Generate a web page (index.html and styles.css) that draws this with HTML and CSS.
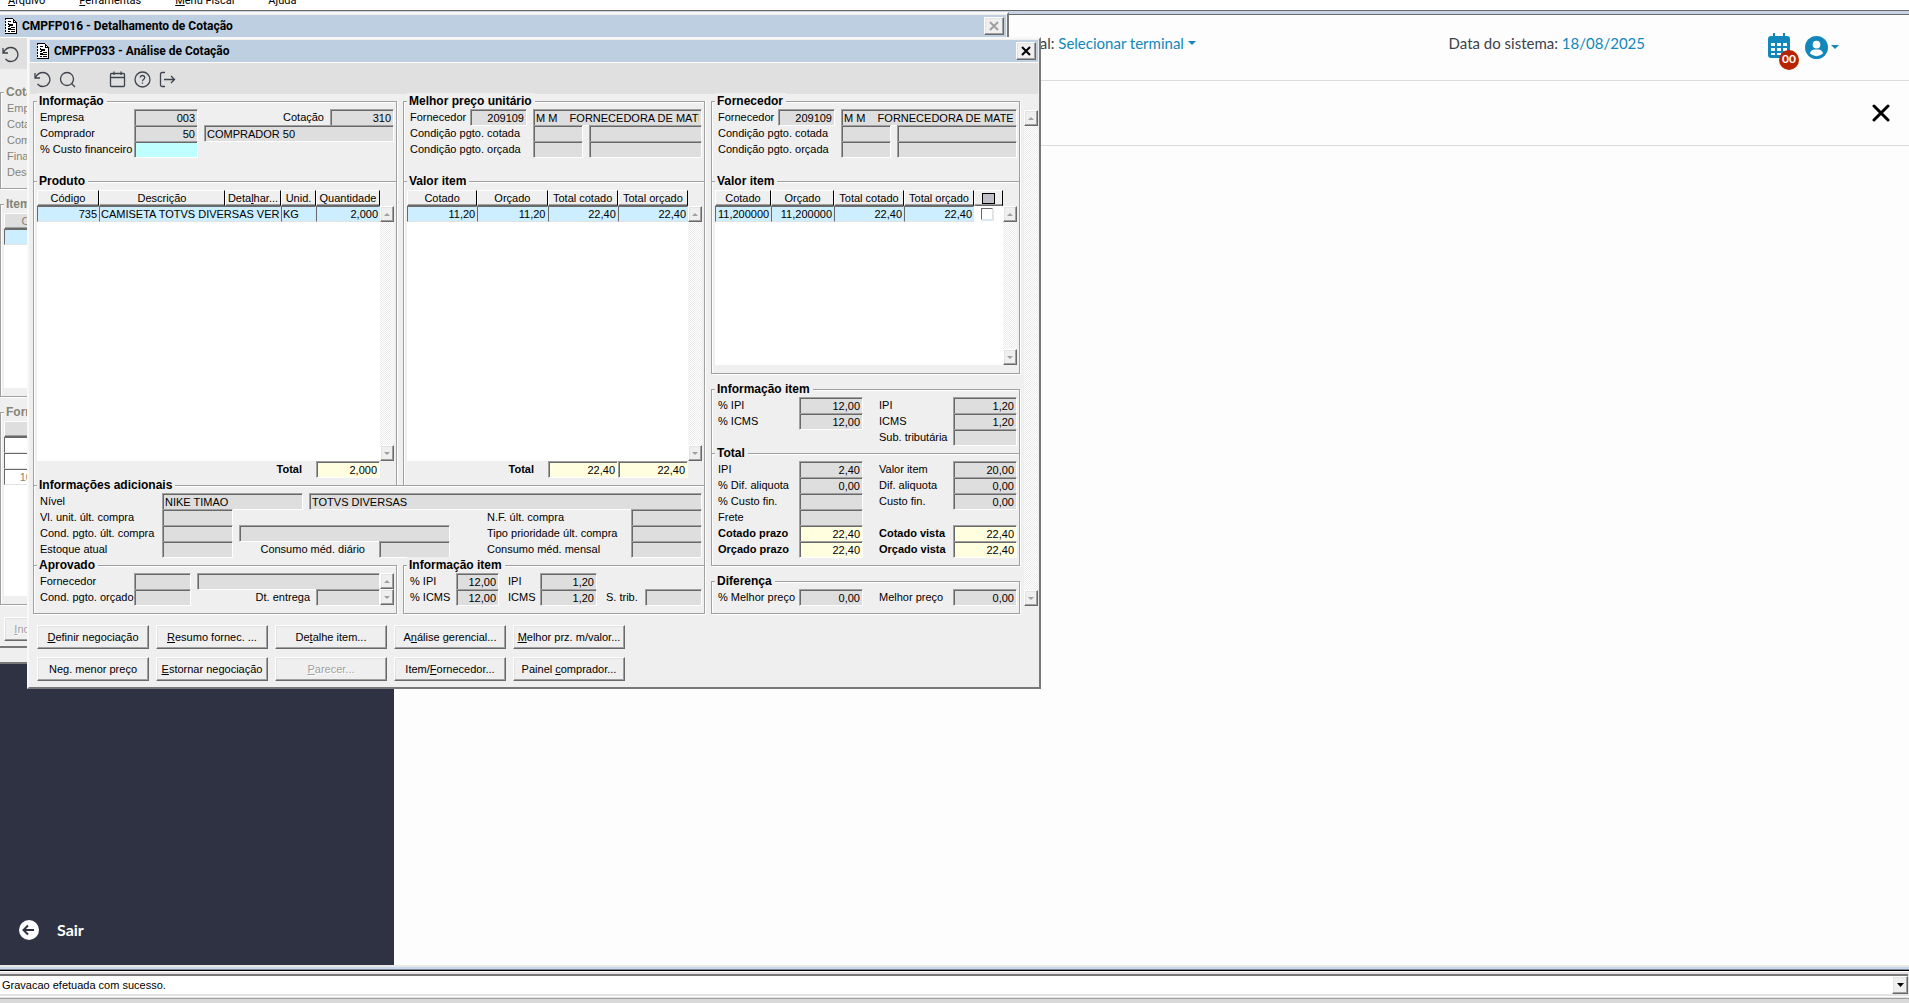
FILE: index.html
```html
<!DOCTYPE html>
<html lang="pt-BR">
<head>
  <meta charset="UTF-8">
  <meta name="viewport" content="width=device-width, initial-scale=1.0">
  <title>CMPFP033 - Análise de Cotação</title>
  <link rel="stylesheet" href="styles.css">
</head>
<body>
  <svg width="0" height="0" class="sprite">
    <symbol id="i-doc" viewBox="0 0 13 16">
      <path d="M1.500 .5h7.500l3 3v12h-10.500z" fill="#fff"/>
      <path d="M1 0h8v1H1zM9 1h1v3h3v12h-1V5H9zM10 2h1v1h-1zM11 3h1v1h-1zM1 15h12v1H1z" fill="#000"/>
      <path d="M1.500 0v16" stroke="#000" stroke-dasharray="2 1" fill="none"/>
      <path d="M4 3h3v1H4zM4 5h1v2H4zM5 6h4v2H5zM4 8h2v1H4zM7 9h4v1H7zM4 10h3v2H4zM7 11h4v1H7zM4 13h2v1H4zM7 13h4v1H7z" fill="#000"/>
    </symbol>
    <symbol id="i-undo" viewBox="0 0 17 17">
      <path d="M1 2v5h5M1.500 6.500C3 3.500 6 1.500 9 1.500a7 7 0 1 1-5.500 11.500" fill="none" stroke="#3f434c" stroke-width="1.300"/>
    </symbol>
    <symbol id="i-search" viewBox="0 0 17 17">
      <path d="M14.500 8a6.500 6.500 0 1 1-13 0 6.500 6.500 0 0 1 13 0zM12.500 12.500l3.500 3.500" fill="none" stroke="#3f434c" stroke-width="1.300"/>
    </symbol>
    <symbol id="i-cal" viewBox="0 0 17 17">
      <path d="M2.500 2.500h12q1 0 1 1v11q0 1-1 1h-12q-1 0-1-1v-11q0-1 1-1zM1.500 6.500h14M5 .5v3.500M12 .5v3.500" fill="none" stroke="#3f434c" stroke-width="1.300"/>
    </symbol>
    <symbol id="i-help" viewBox="0 0 17 17">
      <circle cx="8.500" cy="8.500" r="7.500" fill="none" stroke="#3f434c" stroke-width="1.300"/>
      <path d="M6.300 6.500q.2-2 2.200-2t2.200 2q0 1.200-1.300 2-.9.500-.9 1.700M8.500 11.500v1.300" fill="none" stroke="#3f434c" stroke-width="1.300"/>
    </symbol>
    <symbol id="i-exit" viewBox="0 0 17 17">
      <path d="M6 1.500H3q-1.500 0-1.500 1.500v11q0 1.500 1.500 1.500h3M5 8.500h10.500M12 5l3.500 3.500L12 12" fill="none" stroke="#3f434c" stroke-width="1.300"/>
    </symbol>
  </svg>

  <nav class="menubar">
    <span><u>A</u>rquivo</span>
    <span><u>F</u>erramentas</span>
    <span><u>M</u>enu Fiscal</span>
    <span>A<u>j</u>uda</span>
  </nav>

  <main class="desktop">
    <div class="web">
      <aside class="sidebar">
        <a href="#" class="sair">
          <svg width="20" height="20" viewBox="0 0 20 20"><circle cx="10" cy="10" r="10" fill="#fff"/><path d="M15 10H5M9 5.500L4.500 10 9 14.500" fill="none" stroke="#2f3242" stroke-width="2"/></svg>
          Sair
        </a>
      </aside>
      <div class="content">
        <header class="web-header">
          <span>Terminal: <a href="#">Selecionar terminal <i class="caret"></i></a></span>
          <span class="date">Data do sistema: <a href="#">18/08/2025</a></span>
          <a href="#" class="agenda">
            <svg width="22" height="25" viewBox="0 0 22 25"><path d="M5 0h2v3h8V0h2v3h2q3 0 3 3v16q0 3-3 3H3q-3 0-3-3V6q0-3 3-3h2z" fill="#1187bb"/><path d="M3 10h4v3H3zM9 10h4v3H9zM15 10h4v3h-4zM3 15h4v3H3zM9 15h4v3H9zM15 15h4v3h-4zM3 20h4v2H3zM9 20h4v2H9zM15 20h4v2h-4z" fill="#fff"/></svg>
            <span class="badge">00</span>
          </a>
          <a href="#" class="user">
            <svg width="23" height="23" viewBox="0 0 24 24"><circle cx="12" cy="12" r="12" fill="#1187bb"/><circle cx="12" cy="9" r="4" fill="#fff"/><path d="M5 18q1.500-4 5-4h4q3.500 0 5 4-3 3-7 3t-7-3z" fill="#fff"/></svg>
            <i class="caret"></i>
          </a>
        </header>
        <div class="web-sub">
          <button class="web-close" aria-label="Fechar"><svg width="18" height="18" viewBox="0 0 18 18"><path d="M2 2l14 14M16 2L2 16" stroke="#000" stroke-width="3" stroke-linecap="round"/></svg></button>
        </div>
      </div>
    </div>

    <!-- CMPFP016, atrás -->
    <div class="window win-016">
      <div class="titlebar">
        <svg width="13" height="16"><use href="#i-doc"/></svg>
        <h1>CMPFP016 - Detalhamento de Cotação</h1>
        <button class="close" disabled aria-label="Fechar"><svg width="10" height="10" viewBox="0 0 10 10"><path d="M1 1l8 8M9 1L1 9" stroke="#a0a0a0" stroke-width="2"/></svg></button>
      </div>
      <div class="toolbar">
        <button aria-label="Desfazer"><svg width="17" height="17"><use href="#i-undo"/></svg></button>
      </div>
      <div class="back">
        <section class="group end">
          <h2>Cotação</h2>
          <p>Empresa</p>
          <p>Cotação</p>
          <p>Comprador</p>
          <p>Financeiro</p>
          <p>Descrição</p>
        </section>
        <section class="group end">
          <h2>Item</h2>
          <div class="list">
            <table class="grid">
              <colgroup><col class="w70"><col></colgroup>
              <tr><th>Código</th><th></th></tr>
              <tr class="sel"><td></td><td></td></tr>
            </table>
          </div>
        </section>
        <section class="group end">
          <h2>Fornecedor</h2>
          <div class="list">
            <table class="grid">
              <colgroup><col class="w30"><col></colgroup>
              <tr><th colspan="2"></th></tr>
              <tr><td></td><td></td></tr>
              <tr><td>1</td><td></td></tr>
              <tr><td>10</td><td></td></tr>
            </table>
          </div>
        </section>
        <button class="btn" disabled><u>I</u>ncluir</button>
        <div class="back-foot"></div>
      </div>
    </div>

    <!-- CMPFP033 -->
    <div class="window win-033">
      <div class="titlebar">
        <svg width="13" height="16"><use href="#i-doc"/></svg>
        <h1>CMPFP033 - Análise de Cotação</h1>
        <button class="close" aria-label="Fechar"><svg width="10" height="10" viewBox="0 0 10 10"><path d="M1 1l8 8M9 1L1 9" stroke="#000" stroke-width="2"/></svg></button>
      </div>
      <div class="toolbar">
        <button aria-label="Desfazer"><svg width="17" height="17"><use href="#i-undo"/></svg></button>
        <button aria-label="Pesquisar"><svg width="17" height="17"><use href="#i-search"/></svg></button>
        <span class="sep"></span>
        <button aria-label="Calendário"><svg width="17" height="17"><use href="#i-cal"/></svg></button>
        <button aria-label="Ajuda"><svg width="17" height="17"><use href="#i-help"/></svg></button>
        <button aria-label="Sair"><svg width="17" height="17"><use href="#i-exit"/></svg></button>
      </div>

      <div class="panels">
        <div class="left">
          <section class="group top">
            <h2>Informação</h2>
            <div class="row">
              <label class="w94" for="empresa">Empresa</label><input id="empresa" class="w64 num" value="003" readonly>
              <label class="fill right" for="cotacao">Cotação</label><input id="cotacao" class="w64 num" value="310" readonly>
            </div>
            <div class="row">
              <label class="w94" for="comprador">Comprador</label><input id="comprador" class="w64 num" value="50" readonly>
              <input class="fill gap" aria-label="Nome do comprador" value="COMPRADOR 50" readonly>
            </div>
            <div class="row">
              <label class="w94" for="custo">% Custo financeiro</label><input id="custo" class="w64 num edit">
            </div>
          </section>

          <section class="group top">
            <h2>Melhor preço unitário</h2>
            <div class="row">
              <label class="w60" for="mforn">Fornecedor</label><input id="mforn" class="w57 num" value="209109" readonly>
              <input class="fill gap" aria-label="Nome do fornecedor" value="M M    FORNECEDORA DE MATERIAIS" readonly>
            </div>
            <div class="row">
              <label class="w123" for="mcot">Condição pgto. cotada</label><input id="mcot" class="w50" readonly>
              <input class="fill gap" aria-label="Descrição cotada" readonly>
            </div>
            <div class="row">
              <label class="w123" for="morc">Condição pgto. orçada</label><input id="morc" class="w50" readonly>
              <input class="fill gap" aria-label="Descrição orçada" readonly>
            </div>
          </section>

          <section class="group">
            <h2>Produto</h2>
            <div class="list tall">
              <table class="grid">
                <colgroup><col class="w62"><col class="w126"><col class="w56"><col class="w35"><col></colgroup>
                <tr><th>Código</th><th>Descrição</th><th>Deta<u>l</u>har...</th><th>Unid.</th><th>Quantidade</th></tr>
                <tr class="sel"><td>735</td><td class="txt" colspan="2">CAMISETA TOTVS DIVERSAS VERMELHA</td><td class="txt">KG</td><td>2,000</td></tr>
              </table>
              <div class="scroll"><button class="up" disabled aria-label="Subir"></button><button class="down" disabled aria-label="Descer"></button></div>
            </div>
            <div class="row total">
              <label for="tqtd">Total</label><input id="tqtd" class="w64 num sum" value="2,000" readonly>
            </div>
          </section>

          <section class="group">
            <h2>Valor item</h2>
            <div class="list tall">
              <table class="grid">
                <tr><th>Cotado</th><th>Orçado</th><th>Total cotado</th><th>Total orçado</th></tr>
                <tr class="sel"><td>11,20</td><td>11,20</td><td>22,40</td><td>22,40</td></tr>
              </table>
              <div class="scroll"><button class="up" disabled aria-label="Subir"></button><button class="down" disabled aria-label="Descer"></button></div>
            </div>
            <div class="row total">
              <label for="tcot">Total</label><input id="tcot" class="w70 num sum" value="22,40" readonly>
              <input class="w70 num sum" aria-label="Total orçado" value="22,40" readonly>
            </div>
          </section>

          <section class="group wide">
            <h2>Informações adicionais</h2>
            <div class="row">
              <label class="w122" for="nivel">Nível</label><input id="nivel" class="w141" value="NIKE TIMAO" readonly>
              <input class="fill gap" aria-label="Descrição do nível" value="TOTVS DIVERSAS" readonly>
            </div>
            <div class="row">
              <label class="w122" for="vunit">Vl. unit. últ. compra</label><input id="vunit" class="w71" readonly>
              <label class="w144 push" for="nf">N.F. últ. compra</label><input id="nf" class="w71" readonly>
            </div>
            <div class="row">
              <label class="w122" for="cpg">Cond. pgto. últ. compra</label><input id="cpg" class="w71" readonly>
              <input class="w211 gap" aria-label="Descrição da condição" readonly>
              <label class="w144 push" for="tipo">Tipo prioridade últ. compra</label><input id="tipo" class="w71" readonly>
            </div>
            <div class="row">
              <label class="w122" for="estoque">Estoque atual</label><input id="estoque" class="w71" readonly>
              <label class="w146 far" for="cmd">Consumo méd. diário</label><input id="cmd" class="w71" readonly>
              <label class="w144 push" for="cmm">Consumo méd. mensal</label><input id="cmm" class="w71" readonly>
            </div>
          </section>

          <section class="group end split">
            <h2>Aprovado</h2>
            <div class="rows">
              <div class="row">
                <label class="w94" for="aforn">Fornecedor</label><input id="aforn" class="w57" readonly>
                <input class="fill gap" aria-label="Fornecedor aprovado" readonly>
              </div>
              <div class="row">
                <label class="w94" for="acond">Cond. pgto. orçado</label><input id="acond" class="w57" readonly>
                <label class="fill right" for="dt">Dt. entrega</label><input id="dt" class="w64" readonly>
              </div>
            </div>
            <div class="scroll"><button class="up" disabled aria-label="Subir"></button><button class="down" disabled aria-label="Descer"></button></div>
          </section>

          <section class="group end">
            <h2>Informação item</h2>
            <div class="row">
              <label class="w46" for="pipi">% IPI</label><input id="pipi" class="w43 num" value="12,00" readonly>
              <label class="w41 ind" for="vipi">IPI</label><input id="vipi" class="w57 num" value="1,20" readonly>
            </div>
            <div class="row">
              <label class="w46" for="picms">% ICMS</label><input id="picms" class="w43 num" value="12,00" readonly>
              <label class="w41 ind" for="vicms">ICMS</label><input id="vicms" class="w57 num" value="1,20" readonly>
              <label class="fill ind" for="strib">S. trib.</label><input id="strib" class="w57" readonly>
            </div>
          </section>
        </div>

        <div class="side">
          <section class="group top">
            <h2>Fornecedor</h2>
            <div class="row">
              <label class="w60" for="fforn">Fornecedor</label><input id="fforn" class="w57 num" value="209109" readonly>
              <input class="fill gap" aria-label="Nome do fornecedor" value="M M    FORNECEDORA DE MATERIAIS" readonly>
            </div>
            <div class="row">
              <label class="w123" for="fcot">Condição pgto. cotada</label><input id="fcot" class="w50" readonly>
              <input class="fill gap" aria-label="Descrição cotada" readonly>
            </div>
            <div class="row">
              <label class="w123" for="forc">Condição pgto. orçada</label><input id="forc" class="w50" readonly>
              <input class="fill gap" aria-label="Descrição orçada" readonly>
            </div>
          </section>

          <section class="group end">
            <h2>Valor item</h2>
            <div class="list short">
              <table class="grid">
                <colgroup><col class="w56"><col class="w63"><col class="w70"><col class="w70"><col></colgroup>
                <tr><th>Cotado</th><th>Orçado</th><th>Total cotado</th><th>Total orçado</th><th class="mark"><i></i></th></tr>
                <tr class="sel"><td>11,200000</td><td>11,200000</td><td>22,40</td><td>22,40</td><td class="chk"><input type="checkbox" aria-label="Selecionar"></td></tr>
              </table>
              <div class="scroll"><button class="up" disabled aria-label="Subir"></button><button class="down" disabled aria-label="Descer"></button></div>
            </div>
          </section>

          <section class="group">
            <h2>Informação item</h2>
            <div class="row">
              <label class="w81" for="r1">% IPI</label><input id="r1" class="w64 num" value="12,00" readonly>
              <label class="w74 push" for="r2">IPI</label><input id="r2" class="w64 num" value="1,20" readonly>
            </div>
            <div class="row">
              <label class="w81" for="r3">% ICMS</label><input id="r3" class="w64 num" value="12,00" readonly>
              <label class="w74 push" for="r4">ICMS</label><input id="r4" class="w64 num" value="1,20" readonly>
            </div>
            <div class="row">
              <label class="w74 push" for="r5">Sub. tributária</label><input id="r5" class="w64" readonly>
            </div>
          </section>

          <section class="group end">
            <h2>Total</h2>
            <div class="row">
              <label class="w81" for="t1">IPI</label><input id="t1" class="w64 num" value="2,40" readonly>
              <label class="w74 push" for="t2">Valor item</label><input id="t2" class="w64 num" value="20,00" readonly>
            </div>
            <div class="row">
              <label class="w81" for="t3">% Dif. aliquota</label><input id="t3" class="w64 num" value="0,00" readonly>
              <label class="w74 push" for="t4">Dif. aliquota</label><input id="t4" class="w64 num" value="0,00" readonly>
            </div>
            <div class="row">
              <label class="w81" for="t5">% Custo fin.</label><input id="t5" class="w64" readonly>
              <label class="w74 push" for="t6">Custo fin.</label><input id="t6" class="w64 num" value="0,00" readonly>
            </div>
            <div class="row">
              <label class="w81" for="t7">Frete</label><input id="t7" class="w64" readonly>
            </div>
            <div class="row strong">
              <label class="w81" for="t8">Cotado prazo</label><input id="t8" class="w64 num sum" value="22,40" readonly>
              <label class="w74 push" for="t9">Cotado vista</label><input id="t9" class="w64 num sum" value="22,40" readonly>
            </div>
            <div class="row strong">
              <label class="w81" for="t10">Orçado prazo</label><input id="t10" class="w64 num sum" value="22,40" readonly>
              <label class="w74 push" for="t11">Orçado vista</label><input id="t11" class="w64 num sum" value="22,40" readonly>
            </div>
          </section>

          <section class="group end">
            <h2>Diferença</h2>
            <div class="row">
              <label class="w81" for="d1">% Melhor preço</label><input id="d1" class="w64 num" value="0,00" readonly>
              <label class="w74 push" for="d2">Melhor preço</label><input id="d2" class="w64 num" value="0,00" readonly>
            </div>
          </section>
        </div>

        <div class="scroll outer"><button class="up" disabled aria-label="Subir"></button><button class="down" disabled aria-label="Descer"></button></div>
      </div>

      <div class="actions">
        <button class="btn"><u>D</u>efinir negociação</button>
        <button class="btn"><u>R</u>esumo fornec. ...</button>
        <button class="btn">De<u>t</u>alhe item...</button>
        <button class="btn">A<u>n</u>álise gerencial...</button>
        <button class="btn"><u>M</u>elhor prz. m/valor...</button>
        <button class="btn">Neg. menor preço</button>
        <button class="btn"><u>E</u>stornar negociação</button>
        <button class="btn" disabled><u>P</u>arecer...</button>
        <button class="btn">Item/<u>F</u>ornecedor...</button>
        <button class="btn">Painel <u>c</u>omprador...</button>
      </div>
    </div>
  </main>

  <footer class="status">
    <div class="status-box">
      <select aria-label="Mensagens"><option>Gravacao efetuada com sucesso.</option></select>
      <span class="drop"><svg width="7" height="4" viewBox="0 0 7 4"><path d="M0 0h7L3.500 4z"/></svg></span>
    </div>
  </footer>
</body>
</html>
```
FILE: styles.css
```css
* {
  box-sizing: border-box;
}
body {
  margin: 0;
  height: 100vh;
  display: flex;
  flex-direction: column;
  overflow: hidden;
  background: #fff;
  color: #000;
  font: 11px/16px "Liberation Sans", Arial, sans-serif;
}
h1, h2, p {
  margin: 0;
}
input, button, select {
  font: inherit;
  color: inherit;
  margin: 0;
  padding: 0;
  border: 0;
  border-radius: 0;
  outline: 0;
}
svg {
  display: block;
}
.sprite {
  position: absolute;
}

/* menu */
.menubar {
  flex: none;
  height: 10px;
  padding: 0 8px 2px;
  display: flex;
  align-items: flex-end;
  gap: 34px;
  overflow: hidden;
  font-family: Roboto, sans-serif;
  line-height: 14px;
}

/* área web */
.desktop {
  flex: 1;
  min-height: 0;
  position: relative;
  overflow: hidden;
  display: flex;
  padding-top: 3px;
  border-top: 1px solid #696969;
  background: #c9d3e6;
}
.web {
  flex: 1;
  display: flex;
  background: #fdfdfd;
  border-top: 1px solid #696969;
}
.sidebar {
  width: 394px;
  display: flex;
  align-items: flex-end;
  background: #2f3242;
}
.sair {
  display: flex;
  align-items: center;
  gap: 18px;
  padding: 0 19px 24px;
  color: #fff;
  text-decoration: none;
  font: 700 16px/22px Lato, sans-serif;
}
.content {
  flex: 1;
}
.web-header {
  height: 66px;
  display: flex;
  align-items: center;
  padding: 0 70px 9px 601px;
  border-bottom: 1px solid #dcdcdc;
  color: #3c4248;
  font: 15px/22px Lato, sans-serif;
}
.web-header a {
  color: #1187bb;
  text-decoration: none;
}
.date {
  margin-left: auto;
}
.caret {
  display: inline-block;
  vertical-align: 4px;
  border: 4px solid transparent;
  border-top-color: #1187bb;
  border-bottom: 0;
}
.agenda {
  position: relative;
  margin: 4px 0 0 123px;
}
.badge {
  position: absolute;
  left: 11px;
  top: 17px;
  width: 20px;
  height: 20px;
  border-radius: 50%;
  background: #b92400;
  color: #fff;
  text-align: center;
  font: 700 12px/18px Lato, sans-serif;
}
.user {
  display: flex;
  align-items: center;
  gap: 3px;
  margin: 8px 0 0 15px;
}
.web-sub {
  height: 65px;
  padding: 0 19px;
  display: flex;
  align-items: center;
  justify-content: flex-end;
  border-bottom: 1px solid #dcdcdc;
}
.web-close {
  background: none;
}

/* janelas */
.window {
  position: absolute;
  width: 1014px;
  height: 652px;
  padding: 1px;
  border: 2px solid;
  border-color: #f8f8f8 #787878 #787878 #f8f8f8;
  background: #efefef;
}
.win-016 {
  left: -5px;
  top: 1px;
}
.win-033 {
  left: 27px;
  top: 26px;
}
.titlebar {
  height: 22px;
  display: flex;
  align-items: center;
  gap: 5px;
  padding: 0 2px 0 6px;
  background: #bdcfe0;
}
.titlebar h1 {
  flex: 1;
  font: 700 12px/20px Roboto, sans-serif;
}
.close {
  width: 20px;
  height: 18px;
  display: flex;
  align-items: center;
  justify-content: center;
}
.close, .btn, .scroll button, .drop {
  background: #efefef;
  border: 1px solid;
  border-color: #fff #696969 #696969 #fff;
  box-shadow: inset -1px -1px #a0a0a0, inset 1px 1px #e3e3e3;
}
.toolbar {
  height: 32px;
  display: flex;
  align-items: center;
  gap: 8px;
  padding: 2px 4px 0;
  border-top: 1px solid #fff;
  background: #e0e0e0;
}
.toolbar button {
  background: none;
}
.sep {
  width: 17px;
}

/* grupos */
.panels {
  display: flex;
  align-items: flex-start;
  gap: 6px;
  padding: 7px 0 0 3px;
}
.left {
  flex: none;
  display: grid;
  grid-template-columns: 364px minmax(0, 1fr);
  column-gap: 6px;
  width: 672px;
}
.side {
  flex: 1;
  min-width: 0;
}
.wide {
  grid-column: 1 / -1;
}
.group {
  padding: 0 2px 8px 6px;
  border: solid #a0a0a0;
  border-width: 1px 1px 0;
  box-shadow: inset 1px 1px #fff, 1px 0 #fff;
}
.group.top {
  padding-bottom: 24px;
}
.group.end {
  padding-bottom: 8px;
  border-bottom-width: 1px;
  box-shadow: inset 1px 1px #fff, 1px 1px #fff;
}
.side .end + .group {
  margin-top: 15px;
}
.group h2 {
  width: fit-content;
  margin: -9px 0 0 -3px;
  padding: 0 3px 0 2px;
  background: #efefef;
  font-size: 12px;
  line-height: 16px;
}
.row {
  display: flex;
  height: 16px;
}
.row label {
  flex: none;
  white-space: nowrap;
}
.row .fill {
  flex: 1;
  width: 0;
  min-width: 0;
}
.row .right {
  text-align: right;
  padding-right: 6px;
}
.row .far {
  text-align: right;
  padding-right: 14px;
}
.row .ind {
  padding-left: 9px;
}
.row .push {
  margin-left: auto;
}
.row .gap {
  margin-left: 6px;
}
.strong label, .total label {
  font-weight: 700;
}
.row input {
  height: 17px;
  padding: 0 2px;
  background: #dedede;
  border: 1px solid;
  border-color: #a0a0a0 #fff #fff #a0a0a0;
  box-shadow: inset 1px 1px #696969;
}
.row .num {
  text-align: right;
}
.row .edit {
  background: #c0ffff;
}
.row .sum {
  background: #ffffe0;
}
.total {
  justify-content: flex-end;
  padding-right: 14px;
}
.total label {
  padding-right: 14px;
}

/* listas */
.list {
  display: flex;
  align-items: flex-start;
  margin-left: -3px;
  background: linear-gradient(#efefef 17px, #fff 17px);
}
.list.tall {
  height: 272px;
}
.list.short {
  height: 176px;
}
.grid {
  flex: 1;
  width: 100%;
  margin-top: 1px;
  table-layout: fixed;
  border-collapse: separate;
  border-spacing: 0;
}
.grid th {
  height: 16px;
  padding: 0;
  overflow: hidden;
  font-weight: 400;
  line-height: 13px;
  white-space: nowrap;
  background: #efefef;
  border: 1px solid;
  border-color: #fff #000 #696969 #fff;
  box-shadow: inset 0 -1px #a0a0a0;
}
.grid td {
  height: 16px;
  padding: 0 1px 0 2px;
  overflow: hidden;
  text-align: right;
  line-height: 14px;
  white-space: nowrap;
  background: #fff;
  border: 1px solid;
  border-color: #696969 #e3e3e3 #e3e3e3 #696969;
}
.grid .txt {
  text-align: left;
  padding: 0 0 0 1px;
}
.grid .sel td {
  background: #cceeff;
}
.mark i {
  display: block;
  width: 13px;
  height: 11px;
  margin: 0 auto;
  background: #c0c0c8;
  border: 1px solid #000;
}
.grid .sel .chk {
  background: #fff;
  border: 0;
  padding: 0 7px;
}
.chk input {
  appearance: none;
  display: block;
  width: 12px;
  height: 12px;
  background: #fff;
  border: 1px solid;
  border-color: #696969 #e3e3e3 #e3e3e3 #696969;
  box-shadow: 1px 1px #cceeff;
}
.scroll {
  flex: none;
  width: 14px;
  display: flex;
  flex-direction: column;
  justify-content: space-between;
  background: repeating-conic-gradient(#fff 0 25%, #ececec 0 50%) 0 0 / 2px 2px;
}
.list .scroll {
  align-self: stretch;
  margin-top: 17px;
}
.scroll button {
  width: 14px;
  height: 16px;
  display: flex;
  align-items: center;
  justify-content: center;
}
.scroll button::before {
  content: "";
  border: 3px solid transparent;
}
.scroll .up::before {
  border-top: 0;
  border-bottom-color: #a0a0a0;
}
.scroll .down::before {
  border-bottom: 0;
  border-top-color: #a0a0a0;
}
.scroll.outer {
  height: 496px;
  margin-top: 9px;
  margin-left: -2px;
}
.split {
  display: grid;
  grid-template-columns: minmax(0, 1fr) 14px;
}
.split h2 {
  grid-column: 1 / -1;
}

/* botões */
.actions {
  display: grid;
  grid-template-columns: repeat(5, 112px);
  gap: 8px 7px;
  padding: 11px 7px;
}
.btn {
  height: 24px;
}
.btn:disabled {
  color: #a0a0a0;
  text-shadow: 1px 1px #fff;
}

/* conteúdo da CMPFP016 */
.back {
  padding: 23px 3px 0 2px;
  color: #848478;
}
.back .group {
  margin-bottom: 15px;
}
.back .list {
  height: 176px;
}
.back th {
  background: #dedede;
}
.back .btn {
  display: block;
  width: 50px;
  margin: -3px 0 0 4px;
}
.back-foot {
  margin-top: 5px;
  height: 10px;
  border-top: 2px solid #787878;
}

/* larguras */
.w30 { width: 30px; }
.w35 { width: 35px; }
.w41 { width: 41px; }
.w43 { width: 43px; }
.w46 { width: 46px; }
.w50 { width: 50px; }
.w56 { width: 56px; }
.w57 { width: 57px; }
.w60 { width: 60px; }
.w62 { width: 62px; }
.w63 { width: 63px; }
.w64 { width: 64px; }
.w70 { width: 70px; }
.w71 { width: 71px; }
.w74 { width: 74px; }
.w81 { width: 81px; }
.w94 { width: 94px; }
.w122 { width: 122px; }
.w123 { width: 123px; }
.w126 { width: 126px; }
.w141 { width: 141px; }
.w144 { width: 144px; }
.w146 { width: 146px; }
.w211 { width: 211px; }

/* barra de mensagens */
.status {
  flex: none;
  height: 38px;
  padding-top: 2px;
  border-top: 2px solid #e8e8e8;
  background: linear-gradient(#c9d8ea 2px, #7c8894 2px 3px, #000 3px 4px, #fff 4px 5px, #e3e3e3 5px 29px, #fff 29px 30px, #e3e3e3 30px 31px, #a0a0a0 31px 32px, #d9d9d9 32px);
}
.status-box {
  height: 20px;
  margin: 5px 1px 0 0;
  display: flex;
  background: #fff;
  border-top: 2px solid #787878;
}
.status select {
  flex: 1;
  padding: 0 2px;
  appearance: none;
  background: #fff;
}
.drop {
  width: 16px;
  height: 18px;
  display: flex;
  align-items: center;
  justify-content: center;
}
```
